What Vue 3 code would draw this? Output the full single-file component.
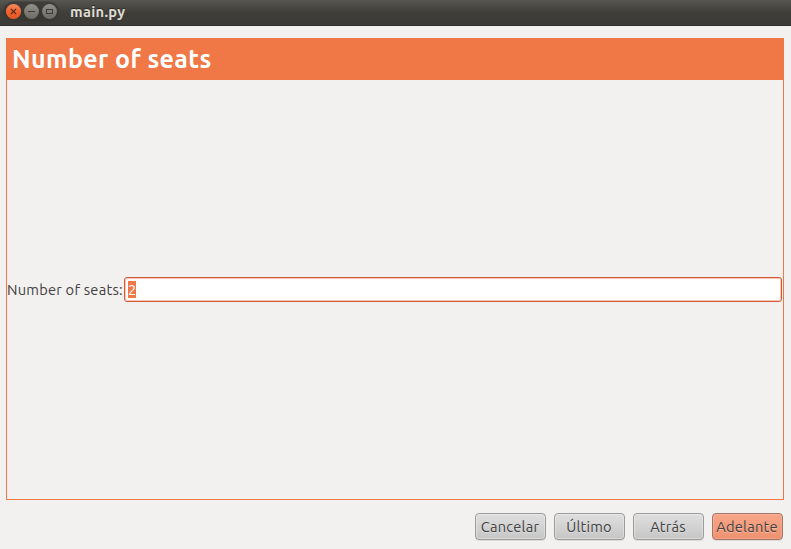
<script setup>
import { ref, onMounted } from 'vue'

const title = 'Number of seats'
const seats = ref('2')
const buttons = [
  { label: 'Cancelar', kind: 'cancel' },
  { label: 'Último', kind: 'last' },
  { label: 'Atrás', kind: 'back' },
  { label: 'Adelante', kind: 'forward' },
]
const field = ref(null)
onMounted(() => {
  field.value.focus()
})
</script>

<template>
  <div class="window">
    <header class="titlebar">
      <svg class="controls" width="56" height="22" viewBox="0 0 56 22">
        <defs>
          <linearGradient id="closeFill" x1="0" y1="0" x2="0" y2="1">
            <stop offset="0" stop-color="#f88c62" />
            <stop offset="0.5" stop-color="#f0642f" />
            <stop offset="1" stop-color="#e75520" />
          </linearGradient>
          <linearGradient id="greyFill" x1="0" y1="0" x2="0" y2="1">
            <stop offset="0" stop-color="#92918a" />
            <stop offset="1" stop-color="#6b6a64" />
          </linearGradient>
        </defs>
        <rect x="0" y="0.5" width="56" height="20" rx="10" fill="#35342f" fill-opacity="0.65" />
        <circle cx="10.5" cy="10.5" r="7.6" fill="url(#closeFill)" />
        <path d="M7.8 7.8l5.4 5.4M13.2 7.8l-5.4 5.4" stroke="#46261a" stroke-width="1.1" />
        <circle cx="28.5" cy="10.5" r="7.4" fill="url(#greyFill)" />
        <path d="M25 10.5h7" stroke="#3c3b37" stroke-width="1" />
        <circle cx="46.5" cy="10.5" r="7.4" fill="url(#greyFill)" />
        <rect x="43.5" y="8.5" width="6" height="4" fill="none" stroke="#3c3b37" stroke-width="1" />
      </svg>
      <span class="window-name">main.py</span>
    </header>

    <main class="panel">
      <h1 class="heading"><span>{{ title }}</span></h1>
      <div class="body">
        <label class="label">{{ title }}:</label>
        <div ref="field" class="entry" tabindex="0"><span class="selected">{{ seats }}</span></div>
      </div>
    </main>

    <footer class="actions">
      <button v-for="b in buttons" :key="b.kind" class="btn" :class="b.kind">
        <span>{{ b.label }}</span>
      </button>
    </footer>
  </div>
</template>

<style>
body {
  margin: 0;
  background: #f2f1f0;
}
</style>

<style scoped>
.window {
  display: flex;
  flex-direction: column;
  box-sizing: border-box;
  height: 549px;
  background: #f2f1f0;
  color: #414141;
  font-family: Ubuntu, "Noto Sans", sans-serif;
  font-size: 14.67px;
  letter-spacing: 0.22px;
  overflow: hidden;
}
.titlebar {
  display: flex;
  align-items: flex-start;
  box-sizing: border-box;
  height: 26px;
  padding-left: 3px;
  background: linear-gradient(#575650 0, #4b4a45 6px, #3e3d38 13px, #3c3b37 25px, #302f2c 25px);
}
.controls {
  margin-top: 1px;
}
.window-name {
  margin-left: 11px;
  line-height: 24px;
  color: #dfdbd2;
  font-weight: 700;
  font-size: 14.67px;
  letter-spacing: 0.3px;
  text-shadow: 0 -1px 0 #2b2a27;
}
.panel {
  display: flex;
  flex-direction: column;
  box-sizing: border-box;
  height: 462px;
  margin: 12px 7px 0 6px;
  border: 1px solid #f07746;
}
.heading {
  box-sizing: border-box;
  height: 41px;
  margin: 0;
  padding-left: 5px;
  background: #f07746;
  color: #fff;
  font-size: 25px;
  font-weight: 700;
  line-height: 40px;
  letter-spacing: 0.37px;
  white-space: nowrap;
}
.body {
  flex: 1;
  display: flex;
  align-items: center;
  padding-right: 1px;
}
.label {
  width: 117px;
  white-space: nowrap;
}
.entry {
  flex: 1;
  display: flex;
  align-items: center;
  box-sizing: border-box;
  height: 25px;
  padding-left: 3px;
  border: 1px solid #cd5b35;
  border-radius: 3px;
  background: #fff;
  box-shadow: inset 0 0 0 1px #f8c8b5;
  outline: none;
}
.selected {
  width: 8px;
  height: 17px;
  line-height: 18px;
  letter-spacing: 0;
  background: #f07746;
  color: #fff;
}
.actions {
  display: flex;
  justify-content: flex-end;
  gap: 8px;
  padding: 13px 8px 0 0;
}
.btn {
  display: flex;
  align-items: center;
  justify-content: center;
  box-sizing: border-box;
  width: 71px;
  height: 27px;
  padding: 0 1px 0 0;
  border: 1px solid #9c9b99;
  border-radius: 4px;
  background: linear-gradient(#dfdfdf, #c6c6c6);
  box-shadow: inset 0 0 0 1px rgba(255, 255, 255, 0.3), 0 1px 0 #dddcdb;
  color: #414141;
  font: inherit;
  letter-spacing: 0.2px;
  white-space: nowrap;
  text-shadow: 0 1px 0 rgba(255, 255, 255, 0.35);
}
.forward {
  border-color: #a07565;
  background: linear-gradient(#f8a688, #ef9270);
  box-shadow: inset 0 0 0 1px rgba(255, 255, 255, 0.15), 0 1px 0 #dddcdb;
}
</style>
